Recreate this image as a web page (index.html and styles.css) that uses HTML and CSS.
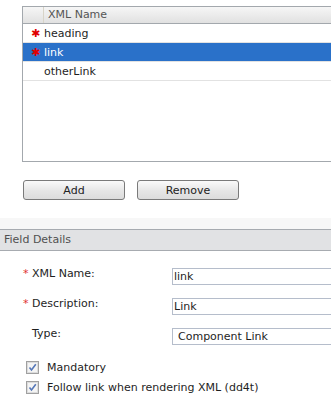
FILE: index.html
```html
<!DOCTYPE html>
<html lang="en">
  <head>
    <meta charset="UTF-8" />
    <title>Field Details</title>
    <link rel="stylesheet" href="styles.css">
  </head>
  <body>
    <div class="grid">
      <div class="grid-head">
        <div class="head-mark"></div>
        <div class="head-cell">XML Name</div>
      </div>
      <div class="row"><span class="req">&#10033;</span>heading</div>
      <div class="row selected"><span class="req">&#10033;</span>link</div>
      <div class="row"><span class="req"></span>otherLink</div>
    </div>

    <div class="actions">
      <button class="btn">Add</button>
      <button class="btn">Remove</button>
    </div>

    <div class="band"></div>
    <div class="section-head">Field Details</div>

    <div class="form">
      <div class="label"><span class="star">*</span>XML Name:</div>
      <div class="field"><input class="text" type="text" value="link" /></div>

      <div class="label"><span class="star">*</span>Description:</div>
      <div class="field"><input class="text" type="text" value="Link" /></div>

      <div class="label"><span class="star"></span>Type:</div>
      <div class="field"><div class="select">Component Link</div></div>
    </div>

    <div class="checks">
      <div class="check">
        <svg class="box" width="13" height="13" viewBox="0 0 13 13">
          <rect x="0.5" y="0.5" width="12" height="12" fill="#e8e8e8" stroke="#a0a0a0" />
          <rect x="1.5" y="1.5" width="10" height="10" fill="#f4f4f4" stroke="#dcdcdc" />
          <path d="M3.5 6.5 L5.5 9 L9.8 3.2" fill="none" stroke="#5577b8" stroke-width="1.6" />
        </svg>
        <span>Mandatory</span>
      </div>
      <div class="check">
        <svg class="box" width="13" height="13" viewBox="0 0 13 13">
          <rect x="0.5" y="0.5" width="12" height="12" fill="#e8e8e8" stroke="#a0a0a0" />
          <rect x="1.5" y="1.5" width="10" height="10" fill="#f4f4f4" stroke="#dcdcdc" />
          <path d="M3.5 6.5 L5.5 9 L9.8 3.2" fill="none" stroke="#5577b8" stroke-width="1.6" />
        </svg>
        <span>Follow link when rendering XML (dd4t)</span>
      </div>
    </div>
  </body>
</html>
```

FILE: styles.css
```css
body {
  margin: 0;
  font: 11px "DejaVu Sans", Verdana, sans-serif;
  color: #1e1e1e;
  background-color: #fff;
  overflow: hidden;
}

/* list of fields */
.grid {
  margin: 6px 0 0 22px;
  height: 154px;
  border: 1px solid #a3a8ad;
  border-right: none;
}
.grid-head {
  display: flex;
  height: 16px;
  background: linear-gradient(#f6f6f6, #e1e1e1);
  border-bottom: 1px solid #a3a8ad;
}
.head-mark {
  width: 20px;
  border-right: 1px solid #d8d4c8;
}
.head-cell {
  padding-left: 4px;
  line-height: 16px;
  color: #555;
}
.row {
  display: flex;
  align-items: center;
  height: 18px;
  border-bottom: 1px solid #e2e2e2;
}
.row.selected {
  background-color: #2a71c9;
  color: #fff;
}
.req {
  width: 13px;
  padding-left: 8px;
  color: #e00000;
  font-size: 11px;
  font-weight: bold;
}

/* buttons */
.actions {
  display: flex;
  gap: 12px;
  margin: 18px 0 0 23px;
}
.btn {
  width: 102px;
  height: 20px;
  padding: 0;
  font: 11px "DejaVu Sans", Verdana, sans-serif;
  color: #222;
  background: linear-gradient(#fafafa, #e6e6e6 55%, #dcdcdc);
  border: 1px solid #7a7a7a;
  border-radius: 3px;
}

/* field details */
.band {
  height: 11px;
  margin-top: 18px;
  background-color: #f7f7f7;
}
.section-head {
  height: 20px;
  line-height: 20px;
  padding-left: 4px;
  color: #505050;
  background-color: #e1e2e4;
  border-top: 1px solid #a7abb0;
  border-bottom: 1px solid #a7abb0;
}
.form {
  display: grid;
  grid-template-columns: 149px 1fr;
  grid-auto-rows: 30px;
  margin-top: 17px;
  padding-left: 23px;
}
.label {
  line-height: 14px;
  margin-top: -1px;
}
.star {
  display: inline-block;
  width: 9px;
  color: #e03030;
}
.text,
.select {
  box-sizing: border-box;
  width: 100%;
  height: 17px;
  margin: 0;
  padding: 0 1px;
  font: 11px "DejaVu Sans", Verdana, sans-serif;
  color: #1e1e1e;
  border: 1px solid #b5bdcb;
  border-right: none;
  outline: none;
}
.select {
  padding-left: 5px;
  line-height: 15px;
}

/* checkboxes */
.checks {
  display: flex;
  flex-direction: column;
  gap: 7px;
  margin: 0 0 0 26px;
  padding-top: 3px;
}
.check {
  display: flex;
  align-items: center;
  gap: 8px;
}
.box {
  display: block;
}
```
